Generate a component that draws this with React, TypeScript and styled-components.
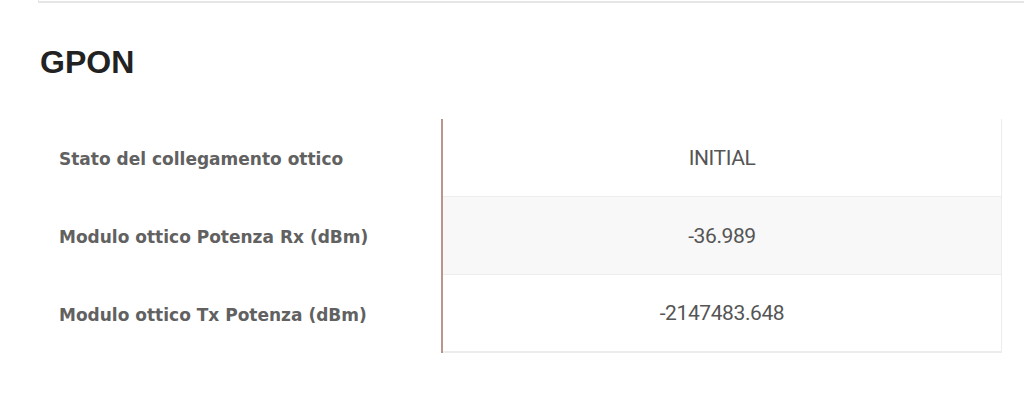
import React from 'react';
import styled, { createGlobalStyle } from 'styled-components';

const GlobalStyle = createGlobalStyle`
  html, body {
    margin: 0;
    padding: 0;
    background: #fff;
  }
`;

const Page = styled.div`
  width: 1024px;
  height: 400px;
  overflow: hidden;
  font-family: 'Liberation Sans', Arial, sans-serif;
`;

// bottom edge of the panel above, cut off by the viewport
const PrevPanel = styled.div`
  margin-left: 38px;
  height: 1px;
  border-left: 1px solid #e6e6e6;
  border-bottom: 2px solid #e6e6e6;
`;

const Section = styled.section`
  padding: 0 22px 0 40px;
`;

const Title = styled.h2`
  margin: 41px 0 0;
  font-size: 32px;
  line-height: 37px;
  font-weight: bold;
  letter-spacing: 0;
  color: #222;
`;

const Table = styled.div`
  margin-top: 38px;
  display: flex;
  flex-direction: column;
`;

const Row = styled.div`
  display: flex;
  height: 78px;
`;

const Label = styled.div`
  width: 403px;
  flex-shrink: 0;
  box-sizing: border-box;
  padding: 2px 0 0 19px;
  display: flex;
  align-items: center;
  font-family: 'DejaVu Sans', 'Liberation Sans', sans-serif;
  font-size: 17px;
  font-weight: bold;
  color: #616161;
  border-right: 2px solid #b8978a;
`;

const Value = styled.div<{ $shaded?: boolean; $last?: boolean }>`
  flex: 1;
  display: flex;
  align-items: center;
  justify-content: center;
  font-family: 'Roboto', 'Liberation Sans', sans-serif;
  font-size: 21px;
  letter-spacing: -0.4px;
  color: #555;
  background: ${(p) => (p.$shaded ? '#f8f8f8' : '#fff')};
  border-right: 1px solid #ececec;
  border-bottom: ${(p) => (p.$last ? '2px solid #ececec' : '1px solid #ededed')};
`;

const rows = [
  { label: 'Stato del collegamento ottico', value: 'INITIAL' },
  { label: 'Modulo ottico Potenza Rx (dBm)', value: '-36.989' },
  { label: 'Modulo ottico Tx Potenza (dBm)', value: '-2147483.648' },
];

export default function App() {
  return (
    <Page>
      <GlobalStyle />
      <PrevPanel />
      <Section>
        <Title>GPON</Title>
        <Table>
          {rows.map((r, i) => (
            <Row key={r.label}>
              <Label>{r.label}</Label>
              <Value $shaded={i === 1} $last={i === rows.length - 1}>
                {r.value}
              </Value>
            </Row>
          ))}
        </Table>
      </Section>
    </Page>
  );
}
